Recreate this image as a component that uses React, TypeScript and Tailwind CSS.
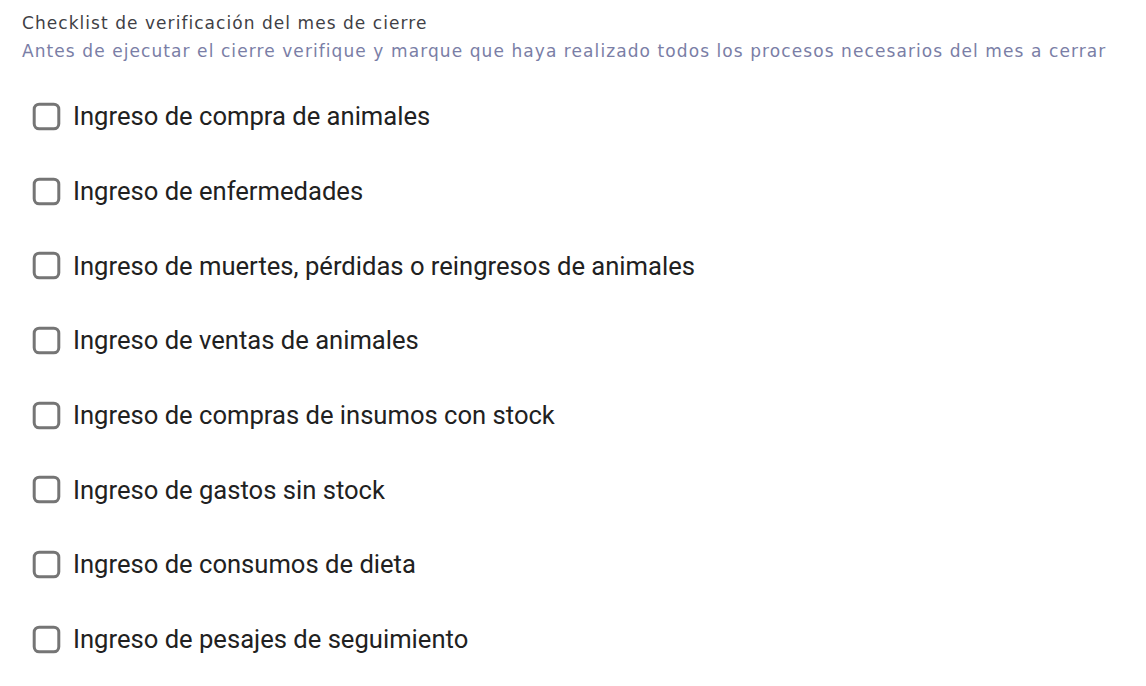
import { useState } from "react";

const items = [
  "Ingreso de compra de animales",
  "Ingreso de enfermedades",
  "Ingreso de muertes, pérdidas o reingresos de animales",
  "Ingreso de ventas de animales",
  "Ingreso de compras de insumos con stock",
  "Ingreso de gastos sin stock",
  "Ingreso de consumos de dieta",
  "Ingreso de pesajes de seguimiento",
];

function BoxIcon({ checked }: { checked: boolean }) {
  return (
    <svg viewBox="0 0 37 37" className="w-[37px] h-[37px] shrink-0">
      <rect
        x="6.2"
        y="6.2"
        width="24.6"
        height="24.6"
        rx="5"
        fill={checked ? "#1976d2" : "none"}
        stroke={checked ? "#1976d2" : "#757575"}
        strokeWidth="3"
      />
      {checked && <path d="M11 18.5l5 5 10-10" fill="none" stroke="#fff" strokeWidth="3" />}
    </svg>
  );
}

export default function App() {
  const [checked, setChecked] = useState<Record<number, boolean>>({});

  return (
    <div className="bg-white min-h-[686px] w-[1146px] px-[22px] pt-[11px]">
      <p className="text-[17px] leading-[24px] tracking-[1.05px] text-[#3f3f46] font-['DejaVu_Sans',sans-serif]">
        Checklist de verificación del mes de cierre
      </p>
      <p className="text-[17px] leading-[24px] tracking-[1.08px] text-[#7a7ea6] font-['DejaVu_Sans',sans-serif] mt-[4px]">
        Antes de ejecutar el cierre verifique y marque que haya realizado todos los procesos necesarios del mes a cerrar
      </p>
      <div className="flex flex-col mt-[16px] pl-[6px]">
        {items.map((text, i) => (
          <label
            key={text}
            className="flex items-center gap-[8px] h-[74.7px] cursor-pointer select-none"
            onClick={() => setChecked((p) => ({ ...p, [i]: !p[i] }))}
          >
            <BoxIcon checked={!!checked[i]} />
            <span className="text-[25.6px] text-[#212121] font-['Roboto',sans-serif]">{text}</span>
          </label>
        ))}
      </div>
    </div>
  );
}
